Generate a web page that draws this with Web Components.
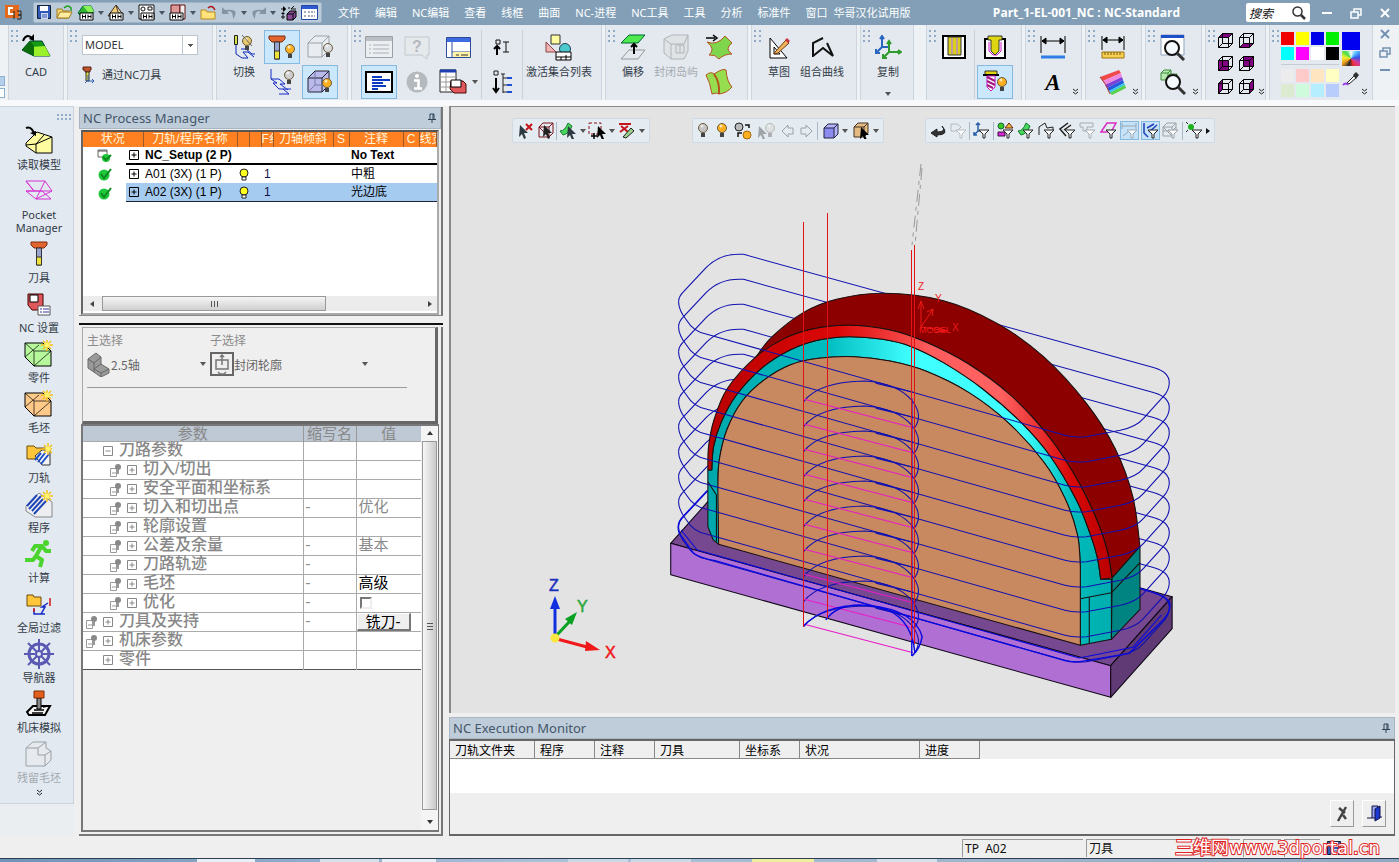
<!DOCTYPE html>
<html lang="zh-CN">
<head>
<meta charset="utf-8">
<title>Part_1-EL-001_NC : NC-Standard</title>
<style>
  html, body { margin: 0; height: 100%; }
  body {
    font: 11px/14px "Noto Sans", "Noto Sans CJK SC", sans-serif;
    color: #333c48;
    background: #efefef;
    overflow: hidden;
  }
</style>
</head>
<body>
<nc-app></nc-app>

<script>
// ---------- icon parts ----------
const bulb = (x, y, c = "#ffb020") => `<circle cx="${x}" cy="${y}" r="4.5" fill="${c}" stroke="#6b5a3a"/><circle cx="${x - 1}" cy="${y - 2}" r="1.5" fill="#fff" opacity=".7"/><path d="M${x - 2} ${y + 5}h4v4h-4z" fill="#444"/>`;
const cube = (x, y, s, d, f, st = "#000", side = f) => `<g stroke="${st}" stroke-linejoin="round"><path d="M${x} ${y + d}l${d} ${-d}h${s}v${s}l${-d} ${d}z" fill="${side}"/><path d="M${x} ${y + d}h${s}v${s}h${-s}zM${x + s} ${y + d}l${d} ${-d}" fill="${f}"/></g>`;
const funnel = (x, y, c = "#222") => `<path d="M${x} ${y}h10l-4 4v4h-2v-4z" fill="#fff" stroke="${c}"/>`;
const cursor = (x, y, c = "#222") => `<path d="M${x} ${y}l8 8h-4l2 5-2 1-2-5-3 3z" fill="${c}"/>`;
const hh = (x, y) => `<path d="M${x} ${y}h13v7h-13z" fill="#fff" stroke="#000"/><path d="M${x + 2.5} ${y + 1.5}v4M${x + 5.5} ${y + 1.5}v4M${x + 2.5} ${y + 3.5}h3M${x + 8} ${y + 1.5}v4M${x + 11} ${y + 1.5}v4M${x + 8} ${y + 3.5}h3" stroke="#000" fill="none"/>`;
const spark = (x, y) => `<path d="M${x} ${y - 6}v12M${x - 6} ${y}h12M${x - 4} ${y - 4}l8 8M${x + 4} ${y - 4}l-8 8" stroke="#f6c21a" stroke-width="1.5"/><circle cx="${x}" cy="${y}" r="2.5" fill="#fff36b"/>`;
const lens = (x, y) => `<circle cx="${x}" cy="${y}" r="7" fill="#f5faff" stroke="#111" stroke-width="2"/><path d="M${x + 5} ${y + 5}l7 7" stroke="#333" stroke-width="3"/>`;
const block = c => `<path d="M1 3h18l8 8v15H10L1 17z" fill="${c}" stroke="#000"/><path d="M1 3l9 8h17M10 11v15M1 17L15 5M10 26L27 11" fill="none" stroke="#000" stroke-opacity=".7"/>`;
const view = face => [17, 17, `<path d="${face}" fill="#800080"/><path d="M1.500 5.500h10v10h-10zM5.500 1.500h10v10h-10zM1.500 5.500l4-4M11.500 5.500l4-4M11.500 15.500l4-4M1.500 15.500l4-4" fill="none" stroke="#000"/>`];
const tool = (x, y) => `<path d="M${x} ${y}h16v3l-3 3h-10l-3-3z" fill="#e2642e" stroke="#7a2c10"/><path d="M${x + 5.5} ${y + 6}h5v17h-5z" fill="#9aa4cf" stroke="#333"/><path d="M${x + 5.5} ${y + 15}h5v8h-5z" fill="#efe33a" stroke="#333"/>`;

const ICONS = {
  logo: [18, 17, `<path d="M1 1h14v13H1z" fill="#e36a1c"/><path d="M9 4H5v6h5" fill="none" stroke="#fff" stroke-width="2"/><path d="M10 7v8M13 7h4v4h-3 3v4h-4" stroke="#222" fill="none"/>`],
  save: [15, 15, `<path d="M.5.5h13v13H.5z" fill="#3157b7" stroke="#123"/><path d="M3 1h8v5H3z" fill="#fff"/><path d="M4 8h7v6H4z" fill="#cfd8ee"/><path d="M5 10h5M5 12h5" stroke="#3157b7"/>`],
  open: [17, 15, `<path d="M1 13V4h5l1 2h6v7z" fill="#f7d774" stroke="#a07a1c"/><path d="M1 13l3-6h12l-3 6z" fill="#ffec9e" stroke="#a07a1c"/><path d="M8 3q4-4 7 0v3" fill="none" stroke="#1fa01f" stroke-width="1.5"/>`],
  nccad: [18, 17, `<path d="M1 9l5-7h8l3 6-5 3H3z" fill="#2fb52f" stroke="#064"/><path d="M6 2h8l3 6H11z" fill="#8df05a"/>${hh(3, 9)}`],
  ncdraft: [18, 17, `<path d="M1 12L9 1l7 10z" fill="#f3cd7a" stroke="#432"/><path d="M9 1l2 7 5 3z" fill="#fff3c4" stroke="#432"/>${hh(3, 9)}`],
  ncpart: [18, 17, `<path d="M1 1h15v14H1z" fill="#fff" stroke="#111"/><circle cx="5" cy="5" r="2" fill="none" stroke="#111"/><path d="M10 3h4v3h-4z" fill="none" stroke="#111"/>${hh(3, 9)}`],
  ncred: [18, 17, `<path d="M2 1h9v9H2z" fill="#d99" stroke="#611"/><path d="M11 1h5v14h-5z" fill="#eee" stroke="#611"/>${hh(1, 9)}`],
  folder: [17, 15, `<path d="M1 5h5l1 2h8v7H1z" fill="#ffe27c" stroke="#b8891d"/><path d="M8 3q4-4 7 2" fill="none" stroke="#a11" stroke-width="1.5"/>`],
  undo: [17, 14, `<path d="M1 1v7h7L6 6q6-3 6 7 8-11-8-9z" fill="#8494a4"/>`],
  redo: [17, 14, `<path d="M16 1v7H9l2-2Q5 3 5 13-3 2 13 4z" fill="#8494a4"/>`],
  swap: [17, 16, `<path d="M1 4h5M4 2v4M14 1l-3 3h5M1 12h4M10 3H8M3 9v5" stroke="#111" fill="none"/>${cube(7, 6, 6, 3, "#8a4b96")}<path d="M1 9l2-2 2 2zM3 1l3 3-3 3z"/>`],
  form: [17, 15, `<path d="M.5.5h16v14H.5z" fill="#fff" stroke="#2347a8"/><path d="M1 1h15v3H1z" fill="#2e59d0"/><path d="M3 7h2M3 11h2M7 7h7M7 11h7" stroke="#557" stroke-dasharray="2 1"/>`],
  cad: [32, 27, `<path d="M2 16L10 7h12l8 15H14z" fill="#159a15" stroke="#043"/><path d="M14 22l-4-9 15-1 5 10z" fill="#9bf02c"/><path d="M2 16l8-9 4 5v10z" fill="#0c6d0c"/><path d="M3 7q3-8 9-3" fill="none" stroke="#000" stroke-width="2"/><path d="M14 0v7l-5-2z"/>`],
  throughnc: [13, 18, `<path d="M1 1h8v3H8v2H3V4H1z" fill="#c0562c" stroke="#5b2210"/><path d="M4 6h3v9H4z" fill="#ece13c" stroke="#333"/><path d="M6 9v6h6M3 17l3-3M10 13l2 2-2 2" fill="none" stroke="#2a5fb0"/>`],
  toggle: [24, 27, `<path d="M2.500 1.500h3v9h-3z" fill="#d8e04c" stroke="#222"/><path d="M4 11v9l6 4h6l-5-6h5l6 5M9 15h5l6 5h3" fill="none" stroke="#0a28b8"/>${bulb(15, 7, "#e8c66a")}<path d="M10 1l10 11" stroke="#666"/>`],
  toolbulb: [28, 27, `${tool(1, 2)}${bulb(22, 15)}`],
  cubebulboff: [28, 26, `${cube(2, 2, 14, 7, "#e9ecf0", "#9aa0a6")}${bulb(22, 14, "#d8dcdf")}`],
  pathbulb: [26, 28, `<path d="M2 1v10l6 4H4l6 6h12M2 11h8l6 5h-5l8 6M10 26h10l-6-5" fill="none" stroke="#1428c8"/>${bulb(20, 7, "#cfcfcf")}`],
  cubebulb: [28, 26, `${cube(2, 2, 14, 7, "#b9b9ea", "#223")}<path d="M9 3v13L2 23M9 16h13" fill="none" stroke="#77a"/>${bulb(21, 14)}`],
  listoff: [28, 22, `<path d="M.5.5h27v21H.5z" fill="#eceff2" stroke="#9aa0a6"/><path d="M1 1h26v4H1z" fill="#b9bec4"/><path d="M4 9h2M8 9h16M4 13h2M8 13h16M4 17h2M8 17h16" stroke="#aab0b6"/>`],
  gantt: [28, 22, `<path d="M1 1h26v20H1z" fill="#fff" stroke="#000" stroke-width="2"/><path d="M7 6h10M7 9h18M7 12h11M7 15h14M7 18h6" stroke="#0a3cc0" stroke-width="2"/>`],
  help: [26, 23, `<path d="M1 1h24v18h-2v4l-5-4H1z" fill="#e6e9ec" stroke="#c3c8cd"/><text x="13" y="16" text-anchor="middle" font-family="Liberation Sans, sans-serif" font-size="16" font-weight="bold" fill="#b4b8bc">?</text>`],
  info: [22, 22, `<circle cx="11" cy="11" r="10.5" fill="#b4b9bd"/><circle cx="11" cy="5" r="2" fill="#fff"/><path d="M8 9.500h4.500V17M8 17.500h8" stroke="#fff" stroke-width="2.500" fill="none"/>`],
  window: [25, 21, `<path d="M.5.5h24v20H.5z" fill="#fff" stroke="#2d4a9b"/><path d="M1 1h23v4H1z" fill="#3d6be0"/><path d="M6 5v15M6 15h18" stroke="#2d4a9b"/><path d="M7 15h17v5H7z" fill="#fff3a4"/><path d="M10 18h3M15 18h7" stroke="#333"/>`],
  tablered: [28, 26, `<path d="M1 1h16v22H1z" fill="#fff" stroke="#222"/><path d="M1 2h16" stroke="#1c3fb0" stroke-width="3"/><path d="M1 8h16M1 13h16M1 18h16M7 4v19" stroke="#999"/><path d="M12 12h12l3 3v9H15l-4-4z" fill="#e0585c" stroke="#4a0b0b"/><path d="M12 11h10v7H12z" fill="#fff" stroke="#000"/>`],
  sortup: [18, 18, `<path d="M3 2h4v4H3zM10 4h6M13 4v10M10 14h6" fill="none" stroke="#111"/><path d="M4 17V9M1 11l3-3 3 3" fill="none" stroke="#000" stroke-width="2"/>`],
  sortdown: [20, 25, `<path d="M2 1h4v4H2zM9 4h4M11 4v19M11 8h6M11 15h5M11 22h5" fill="none" stroke="#222"/><path d="M4 8v13M1 18l3 4 3-4" fill="none" stroke="#000" stroke-width="2"/><path d="M15 8h5M15 15h5M15 22h5" stroke="#1c4fd0" stroke-width="2"/>`],
  shapes: [28, 27, `<path d="M6 1h9v9H6z" fill="#fffca0" stroke="#333"/><path d="M1 8v10h10z" fill="#f2b5b5" stroke="#844"/><circle cx="20" cy="15" r="5.5" fill="#4cc9cf" stroke="#245"/><path d="M11 18h15v8H11zM11 23h15M16 23v3M21 21v5" fill="#fff" stroke="#000"/>`],
  offset: [26, 27, `<path d="M1 9l8-8h16l-7 8z" fill="#4fea4f" stroke="#063"/><path d="M1 25l8-9h16l-7 9z" fill="none" stroke="#999"/><path d="M14 20V10M11 13l3-3 3 3" fill="none" stroke="#000" stroke-width="2"/>`],
  island: [28, 26, `<path d="M2 5l8-4h16v16l-4 8H9L2 19z" fill="#e0e3e6" stroke="#b0b4b8"/><path d="M2 5l7 5h13l4-9M9 10v15M14 11h8v8h-8zM18 11v8" fill="none" stroke="#b0b4b8"/>`],
  surf1: [28, 26, `<path d="M2 8q10 4 18-6l7 7q-8 6 0 11-8 0-13 5-4-5-10-4 7-6-2-13z" fill="#7fd64c" stroke="#b2541b"/><path d="M1 4h9M8 1l4 3-4 3" fill="none" stroke="#000" stroke-width="1.5"/>`],
  surf2: [28, 26, `<path d="M1 6q5-4 8-1 9-6 12-4 1 12 6 17-5 6-13 7-2-2-7 0-2-12-6-19z" fill="#96dd50" stroke="#b2541b"/><path d="M9 5q6 8 5 20" fill="none" stroke="#b2541b" stroke-width="2"/>`],
  sketch: [21, 23, `<path d="M1 2v20h17z" fill="#fff" stroke="#000"/><path d="M5 11v7h6z" fill="none" stroke="#000"/><path d="M6 16L17 4l3 3L9 17l-4 1z" fill="#f0b35a" stroke="#6d3c14"/><path d="M16 4l2-2 3 3-2 2z" fill="#c7323c"/>`],
  combine: [23, 20, `<path d="M12 1L2 6v13l10-8 10 8-6-13" fill="none" stroke="#111" stroke-width="2"/>`],
  copy: [27, 25, `<g fill="none" stroke-width="2"><path d="M7 2v10h6M7 12l-6 6M5 4l2-3 2 3M1 14v4h4" stroke="#2a66c0"/><path d="M14 7v10h11M14 17l-6 6M12 9l2-3 2 3M23 15l3 2-3 2M8 19v4h4" stroke="#2c9b2c"/></g>`],
  pocket: [24, 24, `<path d="M1 1h22v22H1z" fill="#fff" stroke="#000" stroke-width="2"/><path d="M6 2h13v18H6z" fill="#d8cf1c" stroke="#333"/><path d="M10 3v16M15 3v16" stroke="#c49a9a" stroke-width="2"/>`],
  drill: [22, 24, `<path d="M1 4h20v19H1z" fill="#fff" stroke="#000" stroke-width="2"/><path d="M5 7v9l4 4h4l4-4V7" fill="none" stroke="#d018d0"/><path d="M4 1h14v4h-3v11l-4 4-4-4V5H4z" fill="#ddd610" stroke="#333"/>`],
  drillbulb: [26, 24, `<path d="M3 1h12v4H3z" fill="#ddd610" stroke="#333"/><path d="M1 5h16" stroke="#000" stroke-width="2"/><path d="M5 6h8v11l-4 4-4-4z" fill="#fff" stroke="#d018d0"/><path d="M5 7l8 4M5 11l8 4M5 15l6 3" stroke="#a01880" stroke-width="2"/>${bulb(20, 12)}`],
  dimblue: [26, 24, `<path d="M1 1v17M25 1v17M2 6h22M6 3L2 6l4 3zM20 3l4 3-4 3z" stroke="#000"/><path d="M1 22h24" stroke="#2f7fe6" stroke-width="3"/>`],
  letter: [24, 28, `<text x="12" y="22" text-anchor="middle" font-family="Liberation Serif,serif" font-style="italic" font-weight="bold" font-size="23" fill="#000">A</text>`],
  dimruler: [24, 24, `<path d="M1 1v14M23 1v14M2 5h20M6 2L2 5l4 3zM18 2l4 3-4 3z" stroke="#000"/><path d="M1 17h22v6H1z" fill="#f7d051" stroke="#a07410"/><path d="M4 17v3M7 17v3M10 17v3M13 17v3M16 17v3M19 17v3" stroke="#7a5a10"/>`],
  rainbow: [28, 26, `<path d="M1 8L20 1l2 3-18 8z" fill="#f04a4a"/><path d="M4 12l18-8 1 4-17 8z" fill="#f08ae0"/><path d="M6 16l17-8 1 3-16 8z" fill="#7a40d8"/><path d="M8 19l16-8 1 3-15 8z" fill="#2456e0"/><path d="M10 22l15-8 1 2-15 8z" fill="#34c8e6"/><path d="M11 24l15-8 1 3-14 7z" fill="#58d048"/><path d="M1 8q6 6 10 17" fill="none" stroke="#a33"/>`],
  zoomwin: [26, 27, `<path d="M1 1h23v20H1z" fill="#fff" stroke="#8fa3bd"/><path d="M1 1h23v3H1z" fill="#1c50c8"/>${lens(12, 14)}`],
  zoomcube: [26, 26, `${cube(1, 1, 7, 3, "#b6e8b0", "#3b8a3b")}${cube(7, 5, 7, 3, "#b6e8b0", "#3b8a3b")}${lens(13, 13)}`],
  v1: view("M1 6l5-5h10l-5 5z"), v2: view("M1 16l5-5h10l-5 5z"), v3: view("M1 6h10v10H1z"),
  v4: view("M6 1h10v10H6z"), v5: view("M1 6l5-5v10l-5 5z"), v6: view("M11 6l5-5v10l-5 5z"),
  dropper: [18, 16, `<path d="M5 12L12 5l2 2-7 6z" fill="#fff" stroke="#222"/><path d="M11 4l3-3 3 3-3 4z" fill="#333"/><path d="M1 14q3-3 5 0" stroke="#9a3cf0" stroke-width="2" fill="none"/>`],
  search: [14, 14, `<circle cx="5.500" cy="5.500" r="4.500" fill="none" stroke="#333" stroke-width="1.500"/><path d="M9 9l4 4" stroke="#333" stroke-width="2.500"/>`],
  min: [12, 12, `<path d="M1 6h10" stroke="currentColor" stroke-width="2"/>`],
  restore: [12, 12, `<path d="M1 5h7v6H1zM4 5V2h7v6H8" fill="none" stroke="currentColor" stroke-width="1.500"/>`],
  close: [12, 12, `<path d="M2 2l8 8M10 2l-8 8" stroke="currentColor" stroke-width="2"/>`],
  pin: [8, 10, `<path d="M2 1h4v5M2 1v5M5 1v5M0 6.500h8M4 7v3" fill="none" stroke="#2f4255"/>`],
  // sidebar
  read: [28, 30, `<path d="M1 17L12 6l15 5v16H11L1 20z" fill="#fffca0" stroke="#000"/><path d="M11 27V18l8-9M11 18l16-7M1 19l10-1" fill="none" stroke="#000"/><path d="M1 2q5-2 8 5" fill="none" stroke="#000" stroke-width="2"/><path d="M5 7l6-2v5z"/>`],
  pocketmgr: [30, 22, `<path d="M2 1h19l7 10H10zM2 11h16l9 8H12zM2 1l8 10M21 1L12 19M10 11l-8 0M28 11L12 19" fill="none" stroke="#d630d6"/>`],
  cutter: [20, 28, tool(2, 2)],
  ncset: [24, 24, `<path d="M1 2h15v12l-5 4H5l-4-5z" fill="#e0585c" stroke="#400"/><path d="M3 3h8v7H3z" fill="#fff" stroke="#000"/><path d="M11 14h12v9H11z" fill="#fff" stroke="#555"/><path d="M13 17h2M16 17h6M13 20h2M16 20h6" stroke="#339"/>`],
  part: [30, 28, block("#b5f79a") + spark(23, 5)],
  stock: [30, 28, block("#ffc98a") + spark(23, 5)],
  track: [26, 26, `<path d="M1 5h7l2 2h9v11H1z" fill="#ffc63c" stroke="#6d4a08"/><path d="M9 15l7-6h8v15h-8z" fill="#f4f4f4" stroke="#333"/><path d="M9 19l6-7M12 21l7-9M15 23l8-10" stroke="#1c4fc8" stroke-width="2"/>${spark(22, 8)}`],
  program: [28, 28, `<path d="M1 16L14 3l13 9v15H10L1 21z" fill="#eceef2" stroke="#888"/><path d="M2 16L12 5M4 19L16 6M7 21L18 9M9 24L21 11" stroke="#1f46b4" stroke-width="2"/>${spark(22, 6)}`],
  run: [30, 30, `<g fill="none" stroke="#4bd42e" stroke-width="4" stroke-linejoin="round"><path d="M8 12l3-5h7l4 5h5"/><path d="M17 8l-5 9 6 4-2 7"/><path d="M12 17l-3 4H1"/></g><circle cx="22" cy="4" r="3" fill="#4bd42e"/>`],
  filter: [26, 22, `<path d="M1 2h6l1 2h7v9H1z" fill="#ffc63c" stroke="#6d4a08"/><path d="M8 16v5h7l4-7-3 0 6-4M15 21h4" fill="none" stroke="#1428c8" stroke-width="1.500"/><path d="M8 15v4M24 5v8" stroke="#d01818" stroke-width="1.500"/>`],
  helm: [32, 32, `<g fill="none" stroke="#5a5ab4"><circle cx="16" cy="16" r="10" stroke-width="3"/><circle cx="16" cy="16" r="3" stroke-width="2"/><path d="M16 1v12M16 19v12M1 16h12M19 16h12M5 5l9 9M18 18l9 9M27 5l-9 9M14 18l-9 9" stroke-width="2"/></g>`],
  simul: [28, 28, `<path d="M2 22l6-6h17l-5 9H4z" fill="#f4f4f4" stroke="#000" stroke-width="2"/><path d="M9 20h10M7 23h11M18 17l5-1" stroke="#000" stroke-width="1.500"/><path d="M12 8h4v11h-4z" fill="#888" stroke="#000"/><path d="M9 1h10v7H9z" fill="#e2601c" stroke="#7b2a08"/>`],
  rest: [28, 26, `<path d="M1 7l7-6h13v6l5 3v9l-6 6H1zM1 7h12v7h7v11M13 7l8-6M20 14l6-4" fill="#e6eaee" stroke="#9aa0a6"/>`],
  // viewport toolbars
  curx: [18, 17, `${cursor(3, 3, "#2d3a42")}<path d="M9 2l6 6M15 2L9 8" stroke="#c4141c" stroke-width="2"/>`],
  curbox: [17, 17, `${cube(1, 1, 10, 4, "none", "#7a1018")}${cursor(6, 3)}`],
  curface: [18, 17, `<path d="M1 9q5 0 8-8l4 3q-3 8-9 9z" fill="#47d860" stroke="#167a2a"/>${cursor(9, 4, "#2d3a42")}`],
  currect: [18, 17, `<path d="M1 1h12v11H1z" fill="none" stroke="#8b1118" stroke-dasharray="3 2"/><path d="M3 14h6M6 11v6" stroke="#000" stroke-width="1.500"/>${cursor(10, 4, "#000")}`],
  curbrush: [18, 17, `<path d="M1 2h12M3 4l7 6M10 4l-8 6" stroke="#c4141c" stroke-width="2"/><path d="M5 15l8-9 3 3-8 7z" fill="#9ad08c" stroke="#222"/>`],
  bulboff: [13, 17, bulb(6, 6, "#c4c4c4")],
  bulbon: [13, 17, bulb(6, 6)],
  bulbswap: [18, 18, `<circle cx="5" cy="5" r="4" fill="#bbb" stroke="#222"/><circle cx="13" cy="13" r="4" fill="#ffb020" stroke="#a56a0a"/><path d="M11 3h4v3M4 15v-4h4" fill="none" stroke="#111" stroke-width="1.500"/>`],
  bulbcur: [18, 17, `<g opacity=".35">${cursor(1, 4)}${bulb(12, 6, "#ccc")}</g>`],
  prev: [13, 14, `<path d="M1 7l6-6v3h5v6H7v3z" fill="none" stroke="#9aa2aa"/>`],
  next: [13, 14, `<path d="M12 7L6 1v3H1v6h5v3z" fill="none" stroke="#9aa2aa"/>`],
  cubeblue: [16, 16, cube(1, 1, 10, 4, "#8b8bf0", "#224", "#b4b4f8")],
  cubecur: [17, 17, `${cube(1, 1, 10, 4, "#e5bb84", "#432")}${cursor(8, 5, "#000")}`],
  back: [16, 14, `<path d="M1 9l6-4v3q10 0 5-6 8 9-5 9v2z" fill="#333" stroke="#222"/>`],
  f0: [17, 17, `<path d="M1 2h6l4 3-4 4H1z" fill="none" stroke="#b5babf"/>${funnel(6, 8, "#b5babf")}`],
  f1: [17, 17, `<path d="M5 1v8h6M5 9l-4 4M3 3l2-2 2 2M1 10v3h3" fill="none" stroke="#2a5fa8" stroke-width="1.500"/>${funnel(6, 8)}`],
  f2: [17, 17, `<circle cx="4" cy="4" r="3" fill="#3cc81e" stroke="#164"/><path d="M8 6l4-5 4 5z" fill="#f4b93c" stroke="#621"/><path d="M1 10h7v4H1z" fill="#d428d4" stroke="#414"/>${funnel(6, 8)}`],
  f3: [17, 17, `<path d="M1 9q5 0 8-8l4 3q-3 8-9 9z" fill="#47d860" stroke="#167a2a"/>${funnel(6, 8)}`],
  f4: [17, 17, `<path d="M1 13V5l6-4 2 5 6-1v4" fill="none" stroke="#222"/>${funnel(6, 8)}`],
  f5: [17, 17, `<path d="M9 1L1 7l6 7M12 3L5 8" fill="none" stroke="#222" stroke-width="1.500"/>${funnel(6, 8)}`],
  f6: [17, 17, `<path d="M1 1h13v4H8v4H4V5H1z" fill="none" stroke="#a5abb0"/>${funnel(6, 8, "#a5abb0")}`],
  f7: [17, 17, `<path d="M1 10l6-9h9l-5 9z" fill="none" stroke="#d62cc4" stroke-width="1.500"/>${funnel(6, 8)}`],
  f8: [17, 17, `<path d="M1 1v6M15 1v6M1 4h14M2 14l5-4" fill="none" stroke="#93a8b8"/>${funnel(6, 8, "#93a8b8")}`],
  f9: [17, 17, `<path d="M2 1v10l4 4M5 6l7-4M7 10l8-7" fill="none" stroke="#1c3fb8" stroke-width="1.500"/>${funnel(6, 8)}`],
  f10: [17, 17, `${cube(1, 1, 9, 4, "none", "#9aa0a6")}<path d="M1 9h9l4-4" fill="none" stroke="#9aa0a6"/>${funnel(6, 8, "#9aa0a6")}`],
  f11: [17, 17, `<circle cx="5" cy="5" r="3" fill="#1fb41f"/><path d="M0 0l2 2M10 0L8 2M0 10l2-2" stroke="#222"/>${funnel(6, 8)}`],
  // panels
  check: [14, 13, `<circle cx="6" cy="7" r="5.500" fill="#1fc83a"/><path d="M3 6l3 4 7-9" fill="none" stroke="#0b8a20" stroke-width="2"/>`],
  checkdoc: [15, 14, `<path d="M1 1h9v7H1z" fill="#fff" stroke="#666"/><path d="M1 2h9" stroke="#555"/><circle cx="9" cy="9" r="4" fill="#1fc83a"/><path d="M6 8l3 3 5-5" fill="none" stroke="#0b8a20" stroke-width="2"/>`],
  lamp: [10, 14, `<circle cx="5" cy="5" r="4" fill="#ffff20" stroke="#222"/><path d="M3 9h4v3H3z" fill="#fff" stroke="#222"/>`],
  plus: [12, 12, `<path d="M1.500 1.500h9v9h-9zM3.500 6h5M6 3.500v5" fill="none" stroke="currentColor"/>`],
  minus: [12, 12, `<path d="M1.500 1.500h9v9h-9zM3.500 6h5" fill="none" stroke="currentColor"/>`],
  pinbox: [13, 15, `<path d="M1.500 5.500h6v8h-6zM3 10h4" fill="#fff" stroke="#999"/><circle cx="9" cy="4" r="3" fill="#888"/><path d="M9 7v4" stroke="#777" stroke-width="1.500"/>`],
  axis25: [24, 26, `<path d="M1 8l8-6 5 4v7l8 5v4l-8 4L1 17z" fill="#9a9a9a" stroke="#6a6a6a"/><path d="M1 8l6 4v9M7 12l7-6M14 13l-7 5 7 4 8-4M14 22v4" fill="none" stroke="#666"/>`],
  contour: [24, 24, `<path d="M1 1h22v22H1z" fill="#efefef" stroke="#666" stroke-width="2"/><path d="M6 8h12v9H6zM12 13V3M10 5l2-2 2 2M8 20l2 2h4l2-2" fill="none" stroke="#777" stroke-width="1.500"/>`],
  tools: [12, 16, `<path d="M10 1L2 15M3 2l6 5M7 9l3 4" stroke="#444" stroke-width="2.500"/>`],
  door: [17, 17, `<path d="M6 1h6v12H6z" fill="#9aa7ee" stroke="#114"/><path d="M9 4l5-3v12l-5 3z" fill="#1c38d0" stroke="#114"/><path d="M1 13h5M14 12h2" stroke="#114"/>`],
};

class NcIcon extends HTMLElement {
  connectedCallback() {
    const [w, h, body] = ICONS[this.getAttribute("name")];
    this.attachShadow({ mode: "open" }).innerHTML = `
      <style>
        :host { display: inline-flex; flex: none; }
        svg { display: block; }
      </style>
      <svg width="${w}" height="${h}" viewBox="0 0 ${w} ${h}" fill="#000" aria-hidden="true">${body}</svg>`;
  }
}
customElements.define("nc-icon", NcIcon);

// icon button: small, or tall with a caption under the icon
class ToolButton extends HTMLElement {
  connectedCallback() {
    const label = this.getAttribute("label");
    this.attachShadow({ mode: "open" }).innerHTML = `
      <style>
        :host { display: flex; min-width: var(--tool-width, 36px); }
        :host([label]), :host([tall]) { grid-row: span 2; }
        button {
          flex: 1; display: flex; flex-direction: column; align-items: center;
          padding: 0; border: 1px solid transparent; background: none; font: inherit; color: inherit;
        }
        .row { display: flex; align-items: center; justify-content: center; height: var(--tool-height, 32px); gap: 5px; }
        :host([active]) button { background: #cbe7fb; border-color: #86b9e0; }
        :host([disabled]) button { color: #a3a9b0; }
        span { white-space: nowrap; line-height: 18px; }
        i { border: 3px solid transparent; border-top: 4px solid #555; border-bottom: 0; }
        .below { margin-top: 11px; }
      </style>
      <button title="${label || this.getAttribute("icon")}" ${this.hasAttribute("disabled") ? "disabled" : ""}>
        <div class="row"><nc-icon name="${this.getAttribute("icon")}"></nc-icon>${this.hasAttribute("drop") ? "<i></i>" : ""}</div>
        ${label ? `<span>${label}</span>` : ""}
        ${this.hasAttribute("more") ? `<i class="below"></i>` : ""}
      </button>`;
  }
}
customElements.define("tool-button", ToolButton);

class RibbonGroup extends HTMLElement {
  connectedCallback() {
    this.attachShadow({ mode: "open" }).innerHTML = `
      <style>
        :host {
          display: flex; flex: none; box-sizing: border-box; padding: 5px 0 0 2px;
          border: solid #cdd5de; border-width: 0 1px; background: #e3e9ef;
        }
        .grip {
          width: 7px; height: 15px; flex: none;
          background: radial-gradient(circle at 1px 1px, #8fabc6 1px, transparent 1px) 0 0 / 5px 5px;
        }
        .body {
          display: grid; grid-auto-flow: column; grid-template-rows: var(--rows, 34px 34px);
          gap: var(--gap, 1px 2px); align-content: start;
        }
        .more { align-self: end; padding: 0 0 4px 1px; }
        svg { display: block; }
      </style>
      <div class="grip"></div>
      <div class="body"><slot></slot></div>
      ${this.hasAttribute("more") ? `<div class="more"><svg width="7" height="8"><path d="M1 1l2.500 2L6 1M1 4l2.500 2L6 4" fill="none" stroke="#222"/></svg></div>` : ""}`;
  }
}
customElements.define("ribbon-group", RibbonGroup);

class TitleBar extends HTMLElement {
  connectedCallback() {
    const quick = ["save", "open", "nccad+", "ncdraft+", "ncpart+", "ncred+", "folder", "undo+", "redo+", "swap", "form"];
    const menus = ["文件", "编辑", "NC编辑", "查看", "线框", "曲面", "NC-进程", "NC工具", "工具", "分析", "标准件", "窗口"];
    this.attachShadow({ mode: "open" }).innerHTML = `
      <style>
        :host { display: flex; align-items: center; height: 25px; padding: 0 8px 0 4px; background: #829fb7; color: #fff; }
        .quick {
          display: flex; align-items: center; justify-content: space-between; box-sizing: border-box;
          width: 289px; height: 21px; margin: 0 16px 0 11px; padding: 0 3px;
          border: 1px solid #9fb3c6; border-radius: 2px; background: #bccbd9;
        }
        button { display: flex; align-items: center; gap: 3px; padding: 0; border: 0; background: none; color: inherit; }
        i { border: 3px solid transparent; border-top: 4px solid #4a5560; border-bottom: 0; }
        nav { display: flex; gap: 15px; }
        a { color: inherit; text-decoration: none; white-space: nowrap; }
        .note { margin-left: 6px; white-space: nowrap; }
        .grow { flex: 1; }
        h1 { margin: 0 66px 0 0; font: bold 12px/16px "Open Sans", "Noto Sans", sans-serif; white-space: nowrap; }
        label { display: flex; align-items: center; width: 64px; height: 19px; background: #fff; border-radius: 2px; margin-right: 11px; }
        input { width: 46px; box-sizing: border-box; border: 0; padding: 0 0 0 3px; font: italic 12px "Noto Sans CJK SC", sans-serif; background: none; color: #111; }
        input::placeholder { color: #111; }
        .win { display: flex; gap: 17px; }
      </style>
      <nc-icon name="logo"></nc-icon>
      <div class="quick">${quick.map(q => `<button title="${q.replace("+", "")}"><nc-icon name="${q.replace("+", "")}"></nc-icon>${q.endsWith("+") ? "<i></i>" : ""}</button>`).join("")}</div>
      <nav>${menus.map(m => `<a href="#">${m}</a>`).join("")}</nav>
      <span class="note">华哥汉化试用版</span>
      <div class="grow"></div>
      <h1>Part_1-EL-001_NC : NC-Standard</h1>
      <label><input aria-label="搜索" placeholder="搜索"><nc-icon name="search"></nc-icon></label>
      <div class="win">${["min", "restore", "close"].map(n => `<button title="${n}"><nc-icon name="${n}"></nc-icon></button>`).join("")}</div>`;
  }
}
customElements.define("title-bar", TitleBar);

class ColorPalette extends HTMLElement {
  connectedCallback() {
    const strong = ["#f00000", "#ffff00", "#0000e8", "#00f000", "#00ffff", "#ff00ff", "#ffffff", "#000000"];
    const pale = ["#ececec", "#ffcaca", "#ffe5c0", "#ffffc4", "#dcebd0", "#cdfbdc", "#b4eeff", "#b8cdfb"];
    const swatches = list => list.map(c => `<b style="background:${c}"></b>`).join("");
    this.attachShadow({ mode: "open" }).innerHTML = `
      <style>
        :host { display: flex; grid-row: span 2; gap: 3px; padding: 2px 0 0 2px; }
        .set { display: grid; grid-template-columns: repeat(4, 13px); grid-auto-rows: 13px; gap: 2px; }
        .set + .set { margin-top: 4px; padding-top: 4px; border-top: 1px solid #c5ccd4; }
        .side { display: flex; flex-direction: column; gap: 1px; }
        .now { width: 18px; height: 18px; background: #0000f0; }
        .wheel { width: 18px; height: 15px; background: conic-gradient(#fff, #56c2ff, #3455e8, #d03ca0, #f03030, #222, #f0a020, #f4f430, #3cd84c, #fff); }
        nc-icon { margin-top: 4px; }
      </style>
      <div><div class="set">${swatches(strong)}</div><div class="set">${swatches(pale)}</div></div>
      <div class="side"><div class="now"></div><div class="wheel"></div><nc-icon name="dropper"></nc-icon></div>`;
  }
}
customElements.define("color-palette", ColorPalette);

class NcRibbon extends HTMLElement {
  connectedCallback() {
    this.attachShadow({ mode: "open" }).innerHTML = `
      <style>
        :host { display: flex; gap: 3px; height: 75px; background: #eef2f5; border-bottom: 6px solid #f7f9fa; }
        .tab { width: 5px; display: flex; flex-direction: column; gap: 2px; justify-content: flex-end; padding-bottom: 2px; }
        .tab b { height: 8px; border: 1px solid #8db0d0; border-left: 0; background: #fff; }
        .tab b:first-child { background: #b5cfea; }
        .model { display: flex; flex-direction: column; gap: 11px; padding: 5px 0 0 5px; grid-row: span 2; }
        select {
          appearance: none; width: 116px; height: 20px; border: 1px solid #bcc4cc; border-radius: 0; padding: 0 2px; color: #333;
          font: inherit;
          background: linear-gradient(#555, #555) 105px 8px / 5px 1px no-repeat, linear-gradient(#555, #555) 106px 9px / 3px 1px no-repeat,
            linear-gradient(#555, #555) 107px 10px / 1px 1px no-repeat, linear-gradient(#bcc4cc, #bcc4cc) 99px 0 / 1px 20px no-repeat, #fff;
        }
        .through { display: flex; align-items: center; gap: 7px; padding: 0; border: 0; background: none; font: inherit; color: inherit; }
        .line { grid-row: span 2; width: 1px; background: #c9d1da; }
        .wide { --tool-width: 42px; }
        .views { --rows: 23px 23px 23px; --gap: 0; --tool-width: 21px; --tool-height: 18px; }
        .gapped { margin-left: 9px; }
        .win { display: flex; flex-direction: column; gap: 6px; margin-left: auto; padding: 3px 8px 0 0; color: #7391b3; }
        .win button { padding: 0; border: 0; background: none; color: inherit; display: flex; }
      </style>
      <div class="tab"><b></b><b></b></div>
      <ribbon-group style="width:56px"><tool-button icon="cad" label="CAD"></tool-button></ribbon-group>
      <ribbon-group style="width:146px">
        <div class="model">
          <select aria-label="MODEL"><option>MODEL</option></select>
          <button class="through"><nc-icon name="throughnc"></nc-icon><span>通过NC刀具</span></button>
        </div>
      </ribbon-group>
      <ribbon-group style="width:132px">
        <tool-button icon="toggle" label="切换"></tool-button>
        <tool-button icon="toolbulb" active></tool-button><tool-button icon="pathbulb"></tool-button>
        <tool-button icon="cubebulboff" disabled></tool-button><tool-button icon="cubebulb" active></tool-button>
      </ribbon-group>
      <ribbon-group style="width:251px">
        <tool-button icon="listoff" disabled></tool-button><tool-button icon="gantt" active></tool-button>
        <tool-button icon="help" disabled></tool-button><tool-button icon="info" disabled></tool-button>
        <tool-button class="wide" icon="window"></tool-button><tool-button class="wide" icon="tablered" drop></tool-button>
        <div class="line"></div>
        <tool-button icon="sortup"></tool-button><tool-button icon="sortdown"></tool-button>
        <div class="line"></div>
        <tool-button icon="shapes" label="激活集合列表"></tool-button>
      </ribbon-group>
      <ribbon-group style="width:143px">
        <tool-button icon="offset" label="偏移"></tool-button>
        <tool-button icon="island" label="封闭岛屿" disabled></tool-button>
        <tool-button icon="surf1"></tool-button><tool-button icon="surf2"></tool-button>
      </ribbon-group>
      <ribbon-group style="width:106px">
        <tool-button icon="sketch" label="草图"></tool-button>
        <tool-button icon="combine" label="组合曲线"></tool-button>
      </ribbon-group>
      <ribbon-group style="width:54px"><tool-button icon="copy" label="复制" more></tool-button></ribbon-group>
      <ribbon-group class="gapped" style="width:96px">
        <tool-button icon="pocket" tall></tool-button>
        <div class="line"></div>
        <tool-button icon="drill"></tool-button><tool-button icon="drillbulb" active></tool-button>
      </ribbon-group>
      <ribbon-group style="width:57px" more><tool-button icon="dimblue"></tool-button><tool-button icon="letter"></tool-button></ribbon-group>
      <ribbon-group style="width:57px" more><tool-button icon="dimruler"></tool-button><tool-button icon="rainbow"></tool-button></ribbon-group>
      <ribbon-group style="width:57px" more><tool-button icon="zoomwin"></tool-button><tool-button icon="zoomcube"></tool-button></ribbon-group>
      <ribbon-group class="views" style="width:61px" more>
        ${["v1", "v3", "v5", "v2", "v4", "v6"].map(v => `<tool-button icon="${v}"></tool-button>`).join("")}
      </ribbon-group>
      <ribbon-group style="width:104px" more><color-palette></color-palette></ribbon-group>
      <div class="win">${["close", "restore", "min"].map(n => `<button title="${n}"><nc-icon name="${n}"></nc-icon></button>`).join("")}</div>`;
  }
}
customElements.define("nc-ribbon", NcRibbon);

class SideBar extends HTMLElement {
  connectedCallback() {
    const items = [["read", "读取模型"], ["pocketmgr", "Pocket Manager"], ["cutter", "刀具"], ["ncset", "NC 设置"], ["part", "零件"],
      ["stock", "毛坯"], ["track", "刀轨"], ["program", "程序"], ["run", "计算"], ["filter", "全局过滤"], ["helm", "导航器"],
      ["simul", "机床模拟"], ["rest", "残留毛坯"]];
    this.attachShadow({ mode: "open" }).innerHTML = `
      <style>
        :host { display: block; width: 74px; flex: none; background: #ebeef1; }
        .bar {
          box-sizing: border-box; height: 698px; padding: 7px 0 0 5px; background: #e2e9f0;
          border: 1px solid #cad4de; border-left: 0; display: flex; flex-direction: column; align-items: center;
        }
        .grip { align-self: flex-end; width: 15px; height: 8px; margin: 0 1px 4px 0; background: radial-gradient(circle at 1px 1px, #8fabc6 1px, transparent 1px) 0 0 / 4px 4px; }
        button { display: block; width: 68px; padding: 0 0 5px; border: 0; background: none; font: inherit; line-height: 13px; color: inherit; }
        button:disabled { color: #a3a9b0; }
        .icon { display: flex; height: 30px; margin-bottom: 2px; align-items: center; justify-content: center; }
      </style>
      <div class="bar">
        <div class="grip"></div>
        ${items.map(([icon, text]) => `<button ${icon == "rest" ? "disabled" : ""}><div class="icon"><nc-icon name="${icon}"></nc-icon></div>${text}</button>`).join("")}
        <svg width="7" height="8"><path d="M1 1l2.500 2L6 1M1 4l2.500 2L6 4" fill="none" stroke="#222"/></svg>
      </div>`;
  }
}
customElements.define("side-bar", SideBar);

class DockPanel extends HTMLElement {
  connectedCallback() {
    this.attachShadow({ mode: "open" }).innerHTML = `
      <style>
        :host { display: flex; flex-direction: column; }
        header {
          display: flex; align-items: center; justify-content: space-between; box-sizing: border-box; height: 22px;
          padding: 0 4px 0 3px; background: #bfcdda; border: 1px solid #a9b6c2; color: #43566a; font-size: 13px;
        }
      </style>
      <header><span>${this.getAttribute("heading")}</span><nc-icon name="pin"></nc-icon></header>
      <slot></slot>`;
  }
}
customElements.define("dock-panel", DockPanel);

class ProcessTable extends HTMLElement {
  connectedCallback() {
    const rows = [
      { icon: "checkdoc", name: "NC_Setup (2 P)", note: "No Text", cls: "setup" },
      { icon: "check", name: "A01 (3X) (1 P)", n: "1", note: "中粗", cls: "" },
      { icon: "check", name: "A02 (3X) (1 P)", n: "1", note: "光边底", cls: "sel" },
    ];
    this.attachShadow({ mode: "open" }).innerHTML = `
      <style>
        :host {
          display: flex; flex-direction: column; box-sizing: border-box; height: 185px; margin: 1px 2px 0; padding-bottom: 2px;
          border: 2px solid #666; border-color: #555 #aaa #aaa #666; background: #fff; overflow: hidden; color: #000;
        }
        table { table-layout: fixed; width: 100%; border-collapse: collapse; font: 12px/16px "Liberation Sans", "Noto Sans CJK SC", sans-serif; }
        th { height: 15px; padding: 0; font-weight: normal; line-height: 15px; color: #fff5dc; background: #ff8020; border-right: 1px solid #9a5a28; white-space: nowrap; overflow: hidden; }
        td { height: 18px; padding: 0; line-height: 16px; white-space: nowrap; }
        td:first-child { text-align: center; border: 0; }
        .st { vertical-align: middle; }
        .name { display: flex; align-items: center; gap: 5px; padding-left: 2px; }
        td.note, td.lamp { padding-left: 2px; }
        td.num { color: #114; padding-left: 3px; }
        .setup { font-weight: bold; }
        .setup td { height: 16px; }
        .setup td:not(:first-child) { border-bottom: 2px solid #000; }
        .sel td:not(:first-child) { background: #a6cbf0; border-bottom: 1px solid #223; }
        .grow { flex: 1; }
        .scroll { display: flex; align-items: center; height: 15px; background: #ececec; padding: 0 5px 0 7px; }
        .scroll b { box-sizing: border-box; width: 224px; height: 15px; margin: 0 auto 0 8px; border: 1px solid #999; background: linear-gradient(#f5f5f5, #cfcfcf); display: flex; justify-content: center; align-items: center; }
        .l, .r { border: 3px solid transparent; }
        .l { border-right: 4px solid #444; border-left: 0; }
        .r { border-left: 4px solid #444; border-right: 0; }
      </style>
      <table>
        <colgroup>${[43, 17, 94, 12, 12, 12, 60, 16, 54, 16].map(w => `<col style="width:${w}px">`).join("")}<col></colgroup>
        <thead><tr><th colspan="2">状况</th><th>刀轨/程序名称</th><th></th><th></th><th>F纟</th><th>刀轴倾斜</th><th>S</th><th>注释</th><th>C</th><th>线宽</th></tr></thead>
        <tbody>${rows.map(r => `<tr class="${r.cls}">
          <td><nc-icon class="st" name="${r.icon}"></nc-icon></td>
          <td colspan="2"><div class="name"><nc-icon name="plus"></nc-icon>${r.name}</div></td>
          <td class="lamp">${r.n ? `<nc-icon class="st" name="lamp"></nc-icon>` : ""}</td><td></td>
          <td class="num">${r.n || ""}</td><td></td><td></td>
          <td class="note" colspan="3">${r.note}</td></tr>`).join("")}</tbody>
      </table>
      <div class="grow"></div>
      <div class="scroll"><span class="l"></span><b><svg width="8" height="6"><path d="M1.500 0v6M4.500 0v6M7.500 0v6" stroke="#555"/></svg></b><span class="r"></span></div>`;
  }
}
customElements.define("process-table", ProcessTable);

class MethodPicker extends HTMLElement {
  connectedCallback() {
    this.attachShadow({ mode: "open" }).innerHTML = `
      <style>
        :host {
          display: block; box-sizing: border-box; height: 97px; margin: 0 3px; padding: 5px 4px 0 4px;
          border: solid #666; border-width: 1px 3px 3px 1px; border-top-color: #aaa; border-left-color: #aaa; background: #efefef; color: #8c8c8c;
        }
        .row { display: flex; gap: 4px; padding-bottom: 8px; border-bottom: 1px solid #999; margin-right: 24px; }
        .pick { width: 119px; }
        .pick + .pick { width: 158px; }
        label { display: block; font-size: 12px; line-height: 16px; }
        .line { display: flex; align-items: center; height: 30px; color: #666; }
        select {
          appearance: none; flex: 1; min-width: 0; border: 0; padding: 0; font: 12px "Noto Sans CJK SC", sans-serif; color: #666; background: none;
        }
        i { border: 3px solid transparent; border-top: 4px solid #555; border-bottom: 0; }
      </style>
      <div class="row">
        <div class="pick"><label for="main">主选择</label><div class="line"><nc-icon name="axis25"></nc-icon><select id="main"><option>2.5轴</option></select><i></i></div></div>
        <div class="pick"><label for="sub">子选择</label><div class="line"><nc-icon name="contour"></nc-icon><select id="sub"><option>封闭轮廓</option></select><i></i></div></div>
      </div>`;
  }
}
customElements.define("method-picker", MethodPicker);

class ParamTable extends HTMLElement {
  connectedCallback() {
    // [indent, pinned, expander, name, short, value]
    const rows = [
      [19, 0, "minus", "刀路参数", "", ""],
      [26, 1, "plus", "切入/切出", "", ""],
      [26, 1, "plus", "安全平面和坐标系", "", ""],
      [26, 1, "plus", "切入和切出点", "-", "优化"],
      [26, 1, "plus", "轮廓设置", "", ""],
      [26, 1, "plus", "公差及余量", "-", "基本"],
      [26, 1, "plus", "刀路轨迹", "-", ""],
      [26, 1, "plus", "毛坯", "-", `<span class="on">高级</span>`],
      [26, 1, "plus", "优化", "-", `<input type="checkbox" aria-label="优化">`],
      [2, 1, "plus", "刀具及夹持", "-", `<button>铣刀-</button>`],
      [2, 1, "plus", "机床参数", "", ""],
      [19, 0, "plus", "零件", "", ""],
    ];
    this.attachShadow({ mode: "open" }).innerHTML = `
      <style>
        :host {
          display: flex; flex: 1; box-sizing: border-box; margin: 0 2px 2px; border: solid #777; border-width: 2px 1px 2px 2px;
          background: #efefef; font-family: "Liberation Sans", "Noto Sans CJK SC", sans-serif;
        }
        .main { flex: 1; }
        table { table-layout: fixed; width: 100%; border-collapse: collapse; border-bottom: 1px solid #555; color: #888; }
        th { height: 15px; padding: 0; background: #bfc9d5; font-size: 15px; font-weight: normal; line-height: 15px; border-right: 1px solid #999; white-space: nowrap; }
        td { height: 18px; padding: 0 0 0 2px; border: 1px solid #aaa; border-width: 1px 1px 0 0; background: #fff; font-size: 15px; line-height: 16px; vertical-align: top; white-space: nowrap; }
        td:first-child { padding: 0; }
        th:last-child, td:last-child { border-right: 0; }
        .name { display: flex; align-items: center; gap: 5px; height: 18px; }
        .name nc-icon + nc-icon { margin: 0 0 0 -1px; }
        .name span { align-self: flex-start; font-size: 16px; font-weight: 500; }
        .on { color: #000; }
        input {
          display: block; appearance: none; width: 12px; height: 12px; margin: 3px 0 0 1px; background: #fff;
          border: 2px solid #777; border-color: #777 #eee #eee #777;
        }
        button {
          display: block; width: 54px; height: 18px; margin-left: -2px; padding: 0; border: 1px solid #fff; border-right: 2px solid #777; border-bottom: 2px solid #777;
          background: #efefef; font: inherit; line-height: 15px; color: #000;
        }
        .scroll { display: flex; flex-direction: column; align-items: center; width: 17px; background: #f4f4f4; padding: 5px 0 6px; box-sizing: border-box; }
        .scroll b { flex: 1; width: 13px; margin: 6px 0 10px; border: 1px solid #999; background: linear-gradient(90deg, #f7f7f7, #c9c9c9); display: flex; align-items: center; justify-content: center; }
        .up, .down { border: 3px solid transparent; }
        .up { border-bottom: 4px solid #333; border-top: 0; }
        .down { border-top: 4px solid #333; border-bottom: 0; }
      </style>
      <div class="main">
        <table>
          <colgroup><col><col style="width:53px"><col style="width:65px"></colgroup>
          <thead><tr><th>参数</th><th>缩写名</th><th>值</th></tr></thead>
          <tbody>${rows.map(([indent, pinned, exp, name, short, value]) => `<tr>
            <td><div class="name" style="padding-left:${indent}px">${pinned ? `<nc-icon name="pinbox"></nc-icon>` : ""}<nc-icon name="${exp}"></nc-icon><span>${name}</span></div></td>
            <td>${short}</td><td>${value}</td></tr>`).join("")}</tbody>
        </table>
      </div>
      <div class="scroll"><span class="up"></span><b><svg width="6" height="8"><path d="M0 1.500h6M0 4.500h6M0 7.500h6" stroke="#555"/></svg></b><span class="down"></span></div>`;
  }
}
customElements.define("param-table", ParamTable);

// Catmull-Rom through the points, as cubic segments
function spline(points) {
  let d = "";
  for (let i = 0; i < points.length - 1; i++) {
    const a = points[i - 1] || points[i], b = points[i], c = points[i + 1], e = points[i + 2] || c;
    d += `C${b[0] + (c[0] - a[0]) / 6} ${b[1] + (c[1] - a[1]) / 6} ${c[0] - (e[0] - b[0]) / 6} ${c[1] - (e[1] - b[1]) / 6} ${c[0]} ${c[1]}`;
  }
  return d;
}
const start = points => `M${points[0][0]} ${points[0][1]}`;

class ModelViewport extends HTMLElement {
  connectedCallback() {
    this.attachShadow({ mode: "open" }).innerHTML = `
      <style>
        :host { display: block; flex: 1; position: relative; min-height: 0; box-sizing: border-box; border: solid #8a8a8a; border-width: 1px 0 0 2px; background: #e3e3e3; overflow: hidden; }
        .scene { position: absolute; left: -2px; top: -1px; }
        .bars { position: relative; display: flex; padding: 11px 0 0 61px; }
        .bar {
          display: flex; align-items: center; justify-content: space-between; box-sizing: border-box; height: 25px; padding: 0 3px;
          border: 1px solid #cfdae4; border-radius: 2px; background: #e5ecf1;
        }
        .bar button { display: flex; align-items: center; gap: 3px; height: 19px; padding: 0 1px; border: 0; background: none; }
        .bar .active { background: #c6e2f8; box-shadow: inset 0 0 0 1px #86b9e0; }
        .sep { border-left: 1px solid #aab7c4; height: 18px; }
        i { border: 3px solid transparent; border-top: 4px solid #555; border-bottom: 0; }
        .b3 button:last-child i { border: 3px solid transparent; border-left: 4px solid #111; border-right: 0; }
        .b1 { width: 138px; margin-right: 42px; }
        .b2 { width: 192px; margin-right: 41px; }
        .b3 { width: 290px; }
      </style>
      <svg class="scene" width="946" height="606" viewBox="449 106 946 606">${this.scene()}</svg>
      <div class="bars">
        ${this.bar("b1", "curx curbox | curface+ currect+ curbrush+")}
        ${this.bar("b2", "bulboff bulbon bulbswap bulbcur prev next | cubeblue+ cubecur+")}
        ${this.bar("b3", "back f0 | f1 | f2 f3 f4 f5 f6 f7 f8* f9* f10 | f11+")}
      </div>`;
  }
  bar(cls, items) {
    return `<div class="bar ${cls}">${items.split(" ").map(t => {
      if (t == "|") return `<span class="sep"></span>`;
      const name = t.replace(/[+*]/, "");
      return `<button title="${name}" class="${t.endsWith("*") ? "active" : ""}"><nc-icon name="${name}"></nc-icon>${t.endsWith("+") ? "<i></i>" : ""}</button>`;
    }).join("")}</div>`;
  }
  scene() {
    const top = [[325, 350], [370, 290], [457, 218], [550, 178], [680, 160], [850, 182], [1000, 250], [1130, 350], [1250, 490], [1330, 625], [1380, 770], [1400, 920]];
    const redOut = [[190, 690], [192, 620], [207, 540], [245, 445], [325, 350], [400, 298], [480, 268], [580, 256], [700, 270], [800, 306], [920, 372], [1040, 468], [1150, 597], [1230, 730], [1285, 855], [1310, 940], [1322, 1014]];
    const redIn = [[1290, 1018], [1280, 950], [1260, 880], [1222, 780], [1150, 650], [1070, 550], [960, 447], [850, 368], [760, 320], [680, 298], [585, 290], [500, 300], [420, 330], [340, 385], [270, 465], [228, 545], [206, 620], [201, 690]];
    const cyanIn = [[218, 740], [222, 660], [243, 570], [285, 485], [345, 422], [420, 375], [500, 355], [600, 350], [700, 363], [800, 393], [920, 457], [1030, 547], [1130, 665], [1190, 775], [1225, 885], [1233, 980]];
    const redArc = redOut.slice(4).reverse();
    const levels = [...Array(10).keys()].map(i => i * 75);
    const each = (list, d) => list.map(y => `<path d="${d}" transform="translate(0 ${y})"/>`).join("");
    return `
      <defs>
        <linearGradient id="red" x1="190" x2="1322" y1="0" y2="0" gradientUnits="userSpaceOnUse"><stop offset="0" stop-color="#b80000"/><stop offset=".32" stop-color="#dc0808"/><stop offset=".55" stop-color="#ff5c5c"/><stop offset=".72" stop-color="#ff6262"/><stop offset=".9" stop-color="#d80808"/><stop offset="1" stop-color="#b80000"/></linearGradient>
        <linearGradient id="cyan" x1="190" x2="1290" y1="0" y2="0" gradientUnits="userSpaceOnUse"><stop offset="0" stop-color="#00a8ac"/><stop offset=".3" stop-color="#00bcc0"/><stop offset=".52" stop-color="#40ffff"/><stop offset=".8" stop-color="#40ffff"/><stop offset=".93" stop-color="#00bcbc"/><stop offset="1" stop-color="#00b0b0"/></linearGradient>
      </defs>
      <g transform="translate(640 240) scale(.35714 .33333)" stroke-width="3" stroke-linejoin="round">
        <g stroke="#100818">
          <path d="M86 910L258 703L1490 1070L1318 1277z" fill="#764890"/>
          <path d="M86 910L1318 1277V1372L86 1004z" fill="#b06fd2"/>
          <path d="M1318 1277L1490 1070V1166L1318 1372z" fill="#603a74"/>
        </g>
        <g fill="none" stroke="#1010b0" shape-rendering="crispEdges">${each(levels, "M108 185Q108 170 122 155L185 83Q225 38 290 43L1440 383")}</g>
        <g stroke="#181010">
          <path d="${start(top)}${spline(top)}L1322 1014${spline(redArc)}z" fill="#8c0000"/>
          <path d="M190 690V860L205 900L220 913V740${spline(cyanIn)}V1216L1320 1198V1018L1290 1018${spline(redIn)}z" fill="url(#cyan)"/>
          <path d="${start(redOut)}${spline(redOut)}L1290 1018${spline(redIn)}z" fill="url(#red)"/>
          <path d="M1322 1014L1400 920V1108L1320 1198z" fill="#008482"/>
          <path d="M218 740${spline(cyanIn)}V1216L220 913z" fill="#c88860"/>
          <path d="M1233 1076L1320 1058L1400 968M1258 1070V1210M190 725L214 765V905" fill="none"/>
        </g>
        <g fill="none" stroke="#1010b0" shape-rendering="crispEdges">
          ${each(levels, "M1440 383Q1482 396 1482 428Q1482 450 1465 470L1410 535Q1390 560 1345 571L1250 590Q1215 594 1190 586L185 282Q150 275 130 240Q108 210 108 185")}
          ${each(levels, "M458 485Q500 425 630 423Q720 430 760 480Q795 525 768 565M660 430L765 457")}
        </g>
        <g fill="none" stroke="#e81cc8" shape-rendering="crispEdges">${each(levels, "M460 478L765 563")}</g>
        <g fill="none" stroke="#0808e0" stroke-width="4">
          <path d="M188 752L122 828Q100 850 110 880L150 940Q170 955 210 962L1190 1262Q1215 1270 1250 1262L1370 1240L1465 1140Q1490 1110 1482 1085Q1470 1065 1400 1045"/>
          <path d="M115 870L160 930L1230 1254L1380 1222L1460 1125" stroke-width="3"/>
          <path d="M458 1158Q520 1090 640 1096Q770 1110 790 1190Q785 1225 762 1248M520 1140Q560 1080 660 1100Q760 1120 770 1240M761 475V1248"/>
        </g>
      </g>
      <path d="M803.500 222V627M827.500 213V618M911.500 250V640M914.500 245V644" fill="none" stroke="#e01414"/>
      <path d="M921 164L912 245M922 168L915 245" fill="none" stroke="#999" stroke-dasharray="12 5 4 5"/>
      <g fill="none" stroke="#f01818"><path d="M921 327V302M918 309l3-8 3 8M921 327l12-18M927 312l6-3-1 7M921 327l26 4M936 327l11 4-11 1"/></g>
      <g fill="#f01818" font-family="Liberation Sans, sans-serif" font-size="10">
        <text x="918" y="290">Z</text><text x="935" y="302">Y</text><text x="952" y="331">X</text><text x="919" y="333" font-size="9">MODEL</text>
      </g>
      <g stroke-width="3">
        <path d="M555 637V608" stroke="#1030e0"/><path d="M550 609l5-13 5 13z" fill="#1030e0"/>
        <path d="M556 636L570 621" stroke="#08a020"/><path d="M565 619l12-7-5 13z" fill="#08a020"/>
        <path d="M557 639L587 647" stroke="#f01818"/><path d="M586 641l14 9-15 1z" fill="#f01818"/>
        <circle cx="555" cy="638" r="4.500" fill="#f8e840"/>
      </g>
      <g font-family="Liberation Sans, sans-serif" font-size="16" stroke-width=".5">
        <text x="549" y="591" fill="#1c30c0" stroke="#1c30c0">Z</text><text x="577" y="612" fill="#2ca83c" stroke="#2ca83c">Y</text><text x="605" y="658" fill="#f01818" stroke="#f01818">X</text>
      </g>`;
  }
}
customElements.define("model-viewport", ModelViewport);

class ExecutionMonitor extends HTMLElement {
  connectedCallback() {
    const cols = [["刀轨文件夹", 85], ["程序", 60], ["注释", 60], ["刀具", 85], ["坐标系", 60], ["状况", 120], ["进度", 60]];
    this.attachShadow({ mode: "open" }).innerHTML = `
      <style>
        :host { display: flex; flex-direction: column; height: 97px; box-sizing: border-box; border: 2px solid #666; border-width: 2px 1px 2px 1px; background: #fff; color: #000; }
        .head { background: #efefef; }
        table { table-layout: fixed; border-collapse: collapse; width: 530px; }
        th { height: 17px; padding: 0 0 0 5px; text-align: left; font: 12px/16px "Noto Sans CJK SC", sans-serif; border: solid #888; border-width: 0 1px 1px 0; }
        footer { display: flex; justify-content: flex-end; gap: 8px; margin-top: auto; height: 41px; box-sizing: border-box; padding: 7px 8px 7px; background: #efefef; }
        button { display: flex; align-items: center; justify-content: center; width: 24px; padding: 0; border: 1px solid #fff; border-right-color: #999; border-bottom-color: #999; background: #efefef; }
      </style>
      <div class="head"><table><thead><tr>${cols.map(([t, w]) => `<th style="width:${w - 6}px">${t}</th>`).join("")}</tr></thead></table></div>
      <footer><button title="tools"><nc-icon name="tools"></nc-icon></button><button title="exit"><nc-icon name="door"></nc-icon></button></footer>`;
  }
}
customElements.define("execution-monitor", ExecutionMonitor);

class StatusBar extends HTMLElement {
  connectedCallback() {
    this.attachShadow({ mode: "open" }).innerHTML = `
      <style>
        :host { display: flex; justify-content: flex-end; gap: 3px; height: 20px; box-sizing: border-box; padding: 1px 57px 1px 0; position: relative; color: #111; font-size: 12px; line-height: 18px; }
        div { box-sizing: border-box; padding-left: 2px; border: solid #999; border-width: 1px 0 0 1px; white-space: pre; }
        nc-icon { align-self: center; margin-left: 4px; }
        .mark {
          position: absolute; right: 19px; top: 0; font: 18px/20px "DejaVu Sans", "Noto Sans CJK SC", sans-serif;
          color: #fff; -webkit-text-stroke: 2px #e02424; paint-order: stroke;
        }
      </style>
      <div style="width:121px">TP  A02</div><div style="width:154px">刀具</div><div style="width:38px"></div><div style="width:36px"></div><nc-icon name="save"></nc-icon>
      <span class="mark">三维网www.3dportal.cn</span>`;
  }
}
customElements.define("status-bar", StatusBar);

class TaskStrip extends HTMLElement {
  connectedCallback() {
    const tabs = [[197, 58, "#e8f0f7"], [65, 59, "#d5e2ee"], [3, 54, "#e8f0f7"], [132, 60, "#c9d9e8"], [3, 60, "#c9d9e8"], [61, 62, "#eef0a0"], [63, 60, "#d5e2ee"]];
    this.attachShadow({ mode: "open" }).innerHTML = `
      <style>
        :host { display: flex; height: 4px; box-sizing: border-box; border-top: 1px solid #2c3e50; background: linear-gradient(90deg, #6f93b8, #a9c3da 40%, #8fa9c2); }
      </style>
      ${tabs.map(([gap, w, c]) => `<b style="margin-left:${gap}px;width:${w}px;background:${c}"></b>`).join("")}`;
  }
}
customElements.define("task-strip", TaskStrip);

class NcApp extends HTMLElement {
  connectedCallback() {
    this.attachShadow({ mode: "open" }).innerHTML = `
      <style>
        :host { display: flex; flex-direction: column; height: 100vh; }
        main { flex: 1; display: flex; min-height: 0; padding-bottom: 2px; }
        .dock { display: flex; flex-direction: column; width: 364px; flex: none; margin: 0 6px 0 5px; padding-top: 1px; }
        .dock dock-panel { border-right: 2px solid #777; border-bottom: 1px solid #888; }
        .rule { border-top: 2px solid #111; margin: 7px 0 2px; }
        .lower { flex: 1; display: flex; flex-direction: column; border-right: 2px solid #777; border-bottom: 2px solid #777; }
        .work { flex: 1; display: flex; flex-direction: column; min-width: 0; margin-right: 4px; }
        .work dock-panel { margin-top: 4px; }
      </style>
      <title-bar></title-bar>
      <nc-ribbon></nc-ribbon>
      <main>
        <side-bar></side-bar>
        <div class="dock">
          <dock-panel heading="NC Process Manager"><process-table></process-table></dock-panel>
          <div class="rule"></div>
          <div class="lower"><method-picker></method-picker><param-table></param-table></div>
        </div>
        <div class="work">
          <model-viewport></model-viewport>
          <dock-panel heading="NC Execution Monitor"><execution-monitor></execution-monitor></dock-panel>
        </div>
      </main>
      <status-bar></status-bar>
      <task-strip></task-strip>`;
  }
}
customElements.define("nc-app", NcApp);
</script>
</body>
</html>
